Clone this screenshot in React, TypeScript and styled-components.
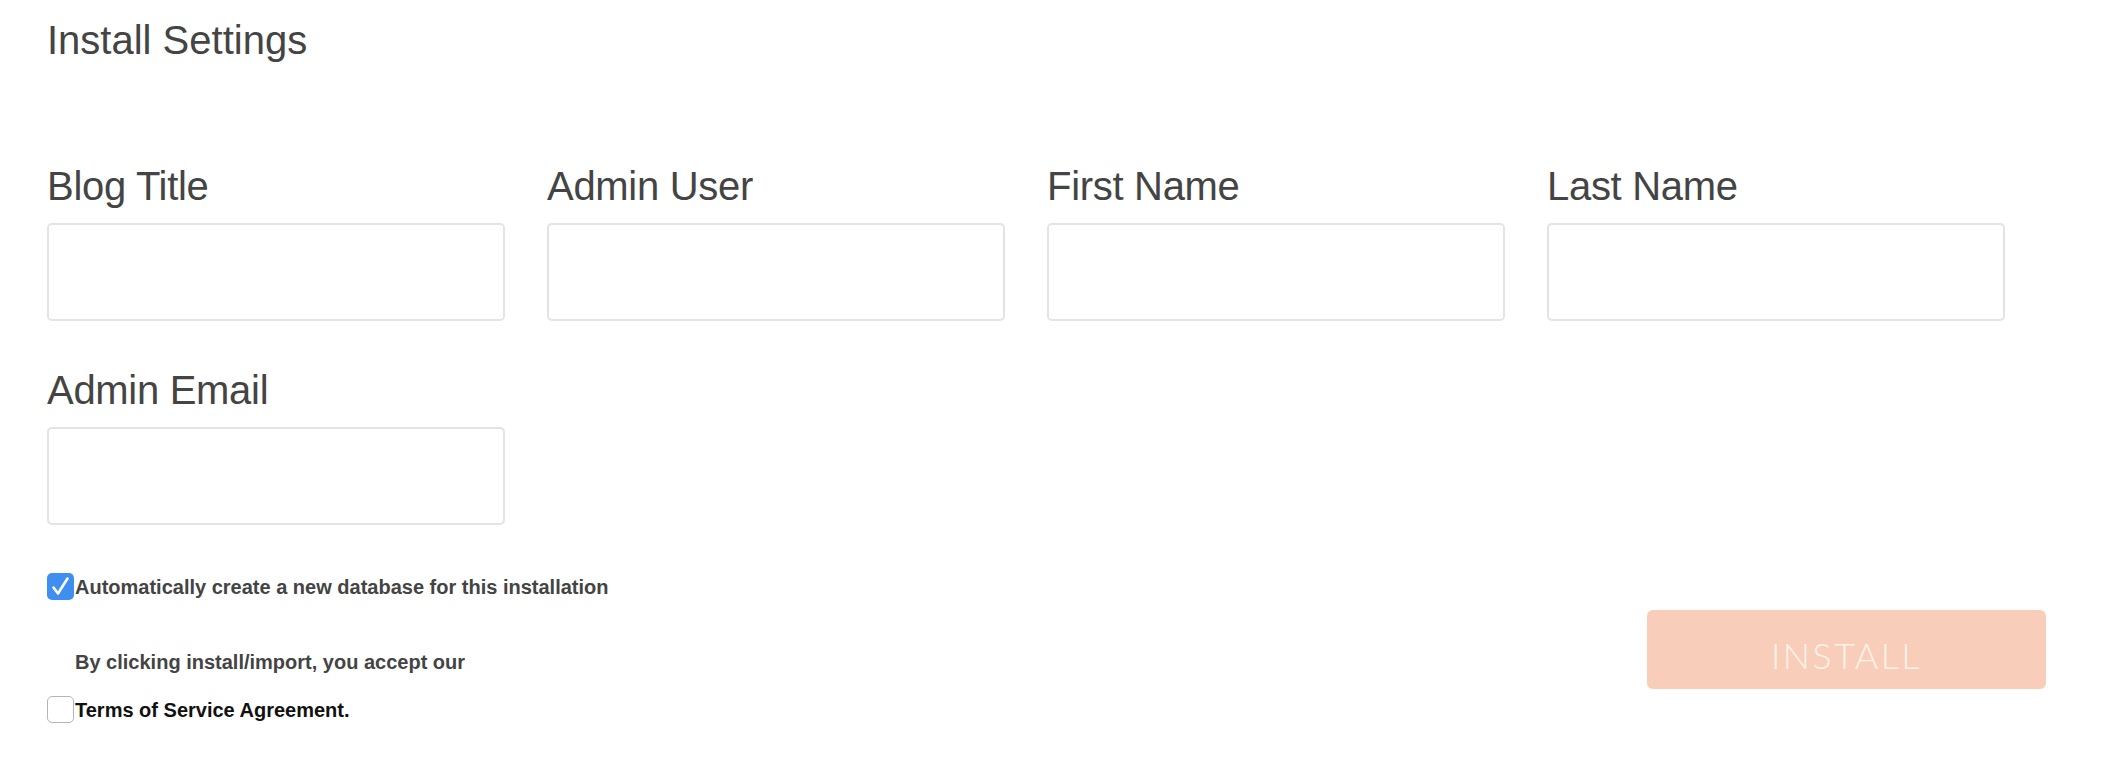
import React from "react";
import styled, { createGlobalStyle } from "styled-components";

const GlobalStyle = createGlobalStyle`
  html, body {
    margin: 0;
    padding: 0;
    background: #ffffff;
  }
  body {
    font-family: "Liberation Sans", Arial, Helvetica, sans-serif;
  }
  * { box-sizing: border-box; }
`;

const Page = styled.div`
  width: 2112px;
  min-height: 772px;
  padding: 20px 66px 0 47px;
  background: #ffffff;
`;

const Title = styled.h1`
  margin: 0;
  font-size: 40px;
  line-height: 40px;
  font-weight: 400;
  color: #444444;
`;

const FieldGrid = styled.div`
  display: grid;
  grid-template-columns: repeat(4, 458px);
  column-gap: 42px;
  row-gap: 49px;
  margin-top: 106px;
`;

const Field = styled.label`
  display: flex;
  flex-direction: column;
  gap: 17px;
`;

const FieldLabel = styled.span`
  font-size: 40px;
  line-height: 40px;
  color: #444444;
  letter-spacing: -0.3px;
`;

const TextInput = styled.input`
  width: 100%;
  height: 98px;
  border: 2px solid #e3e3e3;
  border-radius: 5px;
  background: #ffffff;
  padding: 0 16px;
  font-size: 24px;
  font-family: inherit;
  outline: none;
`;

const Footer = styled.div`
  display: flex;
  align-items: center;
  justify-content: space-between;
  margin-top: 46px;
`;

const Agreements = styled.div`
  display: flex;
  flex-direction: column;
`;

const CheckRow = styled.div`
  display: flex;
  align-items: center;
  gap: 1px;
`;

const Box = styled.span<{ $checked?: boolean }>`
  width: 27px;
  height: 27px;
  flex: none;
  border-radius: 5px;
  display: flex;
  align-items: center;
  justify-content: center;
  background: ${(p) => (p.$checked ? "#3f8ff0" : "#ffffff")};
  border: ${(p) => (p.$checked ? "none" : "1px solid #b5b5b5")};
`;

const CheckText = styled.span<{ $dark?: boolean }>`
  font-size: 20px;
  line-height: 27px;
  padding-top: 3px;
  font-weight: 700;
  color: ${(p) => (p.$dark ? "#111111" : "#444444")};
`;

const Notice = styled.p`
  margin: 48px 0 18px 28px;
  font-size: 20px;
  line-height: 27px;
  font-weight: 700;
  color: #444444;
`;

const InstallButton = styled.button`
  width: 399px;
  height: 79px;
  margin-top: 4px;
  padding: 10px 0 0;
  border: none;
  border-radius: 6px;
  background: #f8cdb9;
  color: #fff3ea;
  font-family: Lato, "Open Sans", sans-serif;
  font-weight: 300;
  font-size: 36px;
  letter-spacing: 2.4px;
  text-transform: uppercase;
  cursor: not-allowed;
`;

const fields = ["Blog Title", "Admin User", "First Name", "Last Name", "Admin Email"];

export default function App() {
  return (
    <>
      <GlobalStyle />
      <Page>
        <Title>Install Settings</Title>
        <FieldGrid>
          {fields.map((f) => (
            <Field key={f}>
              <FieldLabel>{f}</FieldLabel>
              <TextInput type="text" />
            </Field>
          ))}
        </FieldGrid>
        <Footer>
          <Agreements>
            <CheckRow>
              <Box $checked>
                <svg width="27" height="27" viewBox="0 0 27 27">
                  <path
                    d="M6.5 14.5 L11 20.5 L20.5 5.5"
                    fill="none"
                    stroke="#ffffff"
                    strokeWidth="2.6"
                    strokeLinecap="round"
                    strokeLinejoin="round"
                  />
                </svg>
              </Box>
              <CheckText>Automatically create a new database for this installation</CheckText>
            </CheckRow>
            <Notice>By clicking install/import, you accept our</Notice>
            <CheckRow>
              <Box />
              <CheckText $dark>Terms of Service Agreement.</CheckText>
            </CheckRow>
          </Agreements>
          <InstallButton disabled>Install</InstallButton>
        </Footer>
      </Page>
    </>
  );
}
